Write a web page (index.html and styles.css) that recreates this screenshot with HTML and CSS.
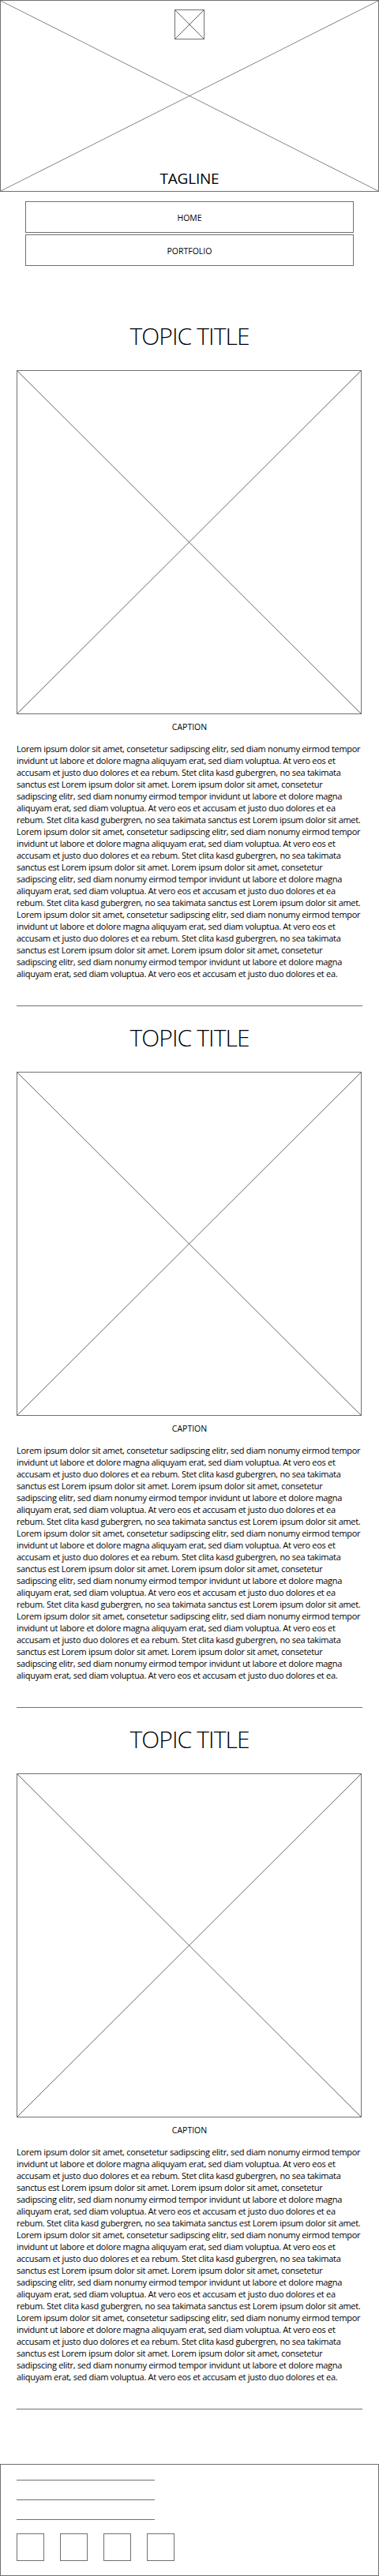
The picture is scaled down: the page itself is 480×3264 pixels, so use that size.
FILE: index.html
```html
<!DOCTYPE html>
<html lang="en">
<head>
  <meta charset="UTF-8">
  <meta name="viewport" content="width=device-width, initial-scale=1.0">
  <title>Portfolio</title>
  <link rel="stylesheet" href="styles.css">
</head>
<body>
  <!-- Hero image with logo and tagline -->
  <header class="hero placeholder">
    <div class="logo placeholder"></div>
    <p class="tagline">TAGLINE</p>
  </header>

  <nav class="menu">
    <a href="#">HOME</a>
    <a href="#">PORTFOLIO</a>
  </nav>

  <main class="content">
    <section class="topic">
      <h2 class="topic-title">TOPIC TITLE</h2>
      <div class="topic-image placeholder"></div>
      <p class="caption">CAPTION</p>
      <p class="topic-text">Lorem ipsum dolor sit amet, consetetur sadipscing elitr, sed diam nonumy eirmod tempor invidunt ut labore et dolore magna aliquyam erat, sed diam voluptua. At vero eos et accusam et justo duo dolores et ea rebum. Stet clita kasd gubergren, no sea takimata sanctus est Lorem ipsum dolor sit amet. Lorem ipsum dolor sit amet, consetetur sadipscing elitr, sed diam nonumy eirmod tempor invidunt ut labore et dolore magna aliquyam erat, sed diam voluptua. At vero eos et accusam et justo duo dolores et ea rebum. Stet clita kasd gubergren, no sea takimata sanctus est Lorem ipsum dolor sit amet. Lorem ipsum dolor sit amet, consetetur sadipscing elitr, sed diam nonumy eirmod tempor invidunt ut labore et dolore magna aliquyam erat, sed diam voluptua. At vero eos et accusam et justo duo dolores et ea rebum. Stet clita kasd gubergren, no sea takimata sanctus est Lorem ipsum dolor sit amet. Lorem ipsum dolor sit amet, consetetur sadipscing elitr, sed diam nonumy eirmod tempor invidunt ut labore et dolore magna aliquyam erat, sed diam voluptua. At vero eos et accusam et justo duo dolores et ea rebum. Stet clita kasd gubergren, no sea takimata sanctus est Lorem ipsum dolor sit amet. Lorem ipsum dolor sit amet, consetetur sadipscing elitr, sed diam nonumy eirmod tempor invidunt ut labore et dolore magna aliquyam erat, sed diam voluptua. At vero eos et accusam et justo duo dolores et ea rebum. Stet clita kasd gubergren, no sea takimata sanctus est Lorem ipsum dolor sit amet. Lorem ipsum dolor sit amet, consetetur sadipscing elitr, sed diam nonumy eirmod tempor invidunt ut labore et dolore magna aliquyam erat, sed diam voluptua. At vero eos et accusam et justo duo dolores et ea.</p>
      <hr class="divider">
    </section>

    <section class="topic">
      <h2 class="topic-title">TOPIC TITLE</h2>
      <div class="topic-image placeholder"></div>
      <p class="caption">CAPTION</p>
      <p class="topic-text">Lorem ipsum dolor sit amet, consetetur sadipscing elitr, sed diam nonumy eirmod tempor invidunt ut labore et dolore magna aliquyam erat, sed diam voluptua. At vero eos et accusam et justo duo dolores et ea rebum. Stet clita kasd gubergren, no sea takimata sanctus est Lorem ipsum dolor sit amet. Lorem ipsum dolor sit amet, consetetur sadipscing elitr, sed diam nonumy eirmod tempor invidunt ut labore et dolore magna aliquyam erat, sed diam voluptua. At vero eos et accusam et justo duo dolores et ea rebum. Stet clita kasd gubergren, no sea takimata sanctus est Lorem ipsum dolor sit amet. Lorem ipsum dolor sit amet, consetetur sadipscing elitr, sed diam nonumy eirmod tempor invidunt ut labore et dolore magna aliquyam erat, sed diam voluptua. At vero eos et accusam et justo duo dolores et ea rebum. Stet clita kasd gubergren, no sea takimata sanctus est Lorem ipsum dolor sit amet. Lorem ipsum dolor sit amet, consetetur sadipscing elitr, sed diam nonumy eirmod tempor invidunt ut labore et dolore magna aliquyam erat, sed diam voluptua. At vero eos et accusam et justo duo dolores et ea rebum. Stet clita kasd gubergren, no sea takimata sanctus est Lorem ipsum dolor sit amet. Lorem ipsum dolor sit amet, consetetur sadipscing elitr, sed diam nonumy eirmod tempor invidunt ut labore et dolore magna aliquyam erat, sed diam voluptua. At vero eos et accusam et justo duo dolores et ea rebum. Stet clita kasd gubergren, no sea takimata sanctus est Lorem ipsum dolor sit amet. Lorem ipsum dolor sit amet, consetetur sadipscing elitr, sed diam nonumy eirmod tempor invidunt ut labore et dolore magna aliquyam erat, sed diam voluptua. At vero eos et accusam et justo duo dolores et ea.</p>
      <hr class="divider">
    </section>

    <section class="topic">
      <h2 class="topic-title">TOPIC TITLE</h2>
      <div class="topic-image placeholder"></div>
      <p class="caption">CAPTION</p>
      <p class="topic-text">Lorem ipsum dolor sit amet, consetetur sadipscing elitr, sed diam nonumy eirmod tempor invidunt ut labore et dolore magna aliquyam erat, sed diam voluptua. At vero eos et accusam et justo duo dolores et ea rebum. Stet clita kasd gubergren, no sea takimata sanctus est Lorem ipsum dolor sit amet. Lorem ipsum dolor sit amet, consetetur sadipscing elitr, sed diam nonumy eirmod tempor invidunt ut labore et dolore magna aliquyam erat, sed diam voluptua. At vero eos et accusam et justo duo dolores et ea rebum. Stet clita kasd gubergren, no sea takimata sanctus est Lorem ipsum dolor sit amet. Lorem ipsum dolor sit amet, consetetur sadipscing elitr, sed diam nonumy eirmod tempor invidunt ut labore et dolore magna aliquyam erat, sed diam voluptua. At vero eos et accusam et justo duo dolores et ea rebum. Stet clita kasd gubergren, no sea takimata sanctus est Lorem ipsum dolor sit amet. Lorem ipsum dolor sit amet, consetetur sadipscing elitr, sed diam nonumy eirmod tempor invidunt ut labore et dolore magna aliquyam erat, sed diam voluptua. At vero eos et accusam et justo duo dolores et ea rebum. Stet clita kasd gubergren, no sea takimata sanctus est Lorem ipsum dolor sit amet. Lorem ipsum dolor sit amet, consetetur sadipscing elitr, sed diam nonumy eirmod tempor invidunt ut labore et dolore magna aliquyam erat, sed diam voluptua. At vero eos et accusam et justo duo dolores et ea rebum. Stet clita kasd gubergren, no sea takimata sanctus est Lorem ipsum dolor sit amet. Lorem ipsum dolor sit amet, consetetur sadipscing elitr, sed diam nonumy eirmod tempor invidunt ut labore et dolore magna aliquyam erat, sed diam voluptua. At vero eos et accusam et justo duo dolores et ea.</p>
      <hr class="divider">
    </section>
  </main>

  <!-- Footer: link lines and social squares -->
  <footer class="footer">
    <div class="footer-links">
      <div class="footer-line"></div>
      <div class="footer-line"></div>
      <div class="footer-line"></div>
    </div>
    <div class="social">
      <div class="social-box"></div>
      <div class="social-box"></div>
      <div class="social-box"></div>
      <div class="social-box"></div>
    </div>
  </footer>
</body>
</html>
```

FILE: styles.css
```css
/* Base */
body {
  margin: 0;
  font-family: "Open Sans", "Noto Sans", sans-serif;
  color: #000;
  background-color: #fff;
}

/* Wireframe image placeholder: box with a cross */
.placeholder {
  box-sizing: border-box;
  border: 1px solid #707070;
  background-image:
    linear-gradient(to top right, transparent calc(50% - 0.8px), #777 50%, transparent calc(50% + 0.8px)),
    linear-gradient(to bottom right, transparent calc(50% - 0.8px), #777 50%, transparent calc(50% + 0.8px));
}

/* Header */
.hero {
  height: 243px;
  display: flex;
  flex-direction: column;
  align-items: center;
  justify-content: space-between;
  padding: 11px 0 4px;
}
.logo {
  width: 38px;
  height: 38px;
  background-color: #fff;
}
.tagline {
  margin: 0;
  font-size: 19px;
  line-height: 24px;
  letter-spacing: -0.2px;
}

/* Menu */
.menu {
  margin: 12px 32px 0;
  display: flex;
  flex-direction: column;
  gap: 2px;
}
.menu a {
  box-sizing: border-box;
  height: 40px;
  padding-top: 2px;
  border: 1px solid #707070;
  display: flex;
  align-items: center;
  justify-content: center;
  font-size: 10.5px;
  color: #000;
  text-decoration: none;
}

/* Topics */
.content {
  padding: 69px 21px 0;
}
.topic-title {
  margin: 0 0 23px;
  font-size: 30px;
  font-weight: 300;
  line-height: 40px;
  letter-spacing: -0.9px;
  text-align: center;
}
.topic-image {
  width: 437px;
  height: 436px;
}
.caption {
  margin: 9px 0 0;
  font-size: 10.5px;
  line-height: 15px;
  text-align: center;
}
.topic-text {
  margin: 12px 0 0;
  font-size: 11px;
  line-height: 15px;
  letter-spacing: -0.3px;
}
.divider {
  margin: 33px 0 20px;
  height: 0;
  border: 0;
  border-top: 1px solid #707070;
}

/* Footer */
.footer {
  margin-top: 69px;
  height: 142px;
  box-sizing: border-box;
  padding: 19px 20px 18px;
  border: 1px solid #707070;
}
.footer-links {
  display: flex;
  flex-direction: column;
  gap: 24px;
}
.footer-line {
  width: 175px;
  border-top: 1px solid #707070;
}
.social {
  margin-top: 17px;
  display: flex;
  gap: 20px;
}
.social-box {
  box-sizing: border-box;
  width: 35px;
  height: 35px;
  border: 1px solid #707070;
}
```
